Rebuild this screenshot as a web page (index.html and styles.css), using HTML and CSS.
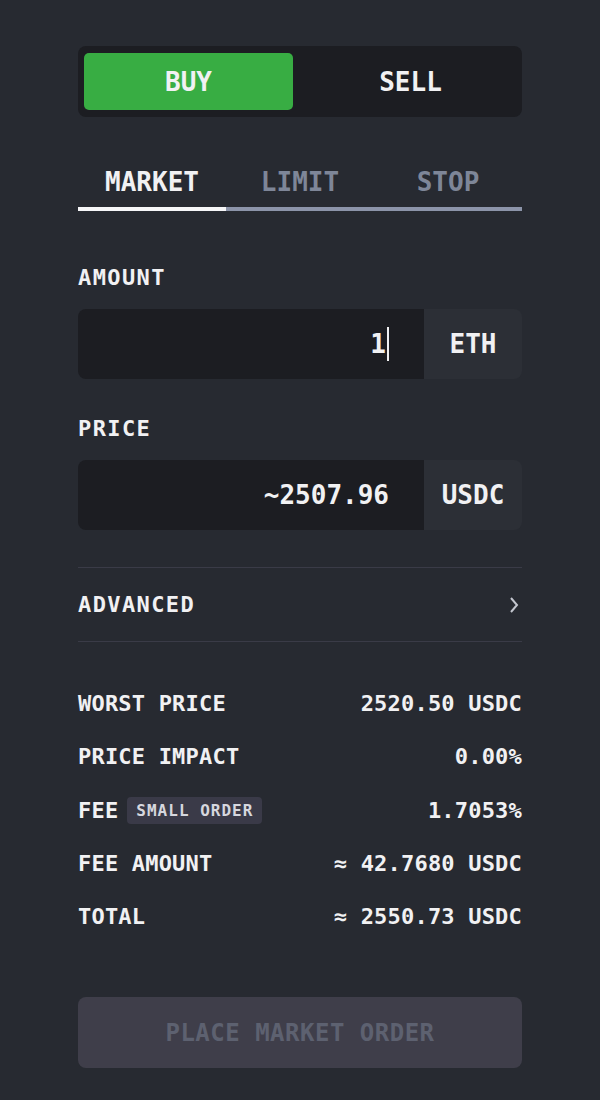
FILE: index.html
```html
<!DOCTYPE html>
<html lang="en">
<head>
    <meta charset="UTF-8">
    <meta name="viewport" content="width=device-width, initial-scale=1.0">
    <title>Order form</title>
    <link rel="stylesheet" href="styles.css">
</head>
<body>
    <main class="order-panel">
        <div class="side-toggle">
            <button class="side-btn side-buy">BUY</button>
            <button class="side-btn side-sell">SELL</button>
        </div>

        <nav class="order-tabs">
            <div class="tab active">MARKET</div>
            <div class="tab">LIMIT</div>
            <div class="tab">STOP</div>
        </nav>

        <label class="field-label label-amount">AMOUNT</label>
        <div class="field">
            <div class="field-value">1<span class="caret"></span></div>
            <div class="field-unit">ETH</div>
        </div>

        <label class="field-label label-price">PRICE</label>
        <div class="field">
            <div class="field-value">~2507.96</div>
            <div class="field-unit">USDC</div>
        </div>

        <div class="advanced-row">
            <span>ADVANCED</span>
            <svg class="chevron" width="12" height="18" viewBox="0 0 12 18">
                <polyline points="3,2 9,9 3,16" fill="none" stroke="#c3c6ce" stroke-width="2"/>
            </svg>
        </div>

        <div class="summary">
            <div class="summary-row">
                <span>WORST PRICE</span>
                <span>2520.50 USDC</span>
            </div>
            <div class="summary-row">
                <span>PRICE IMPACT</span>
                <span>0.00%</span>
            </div>
            <div class="summary-row">
                <span class="fee-label">FEE <span class="badge">SMALL ORDER</span></span>
                <span>1.7053%</span>
            </div>
            <div class="summary-row">
                <span>FEE AMOUNT</span>
                <span>≈ 42.7680 USDC</span>
            </div>
            <div class="summary-row">
                <span>TOTAL</span>
                <span>≈ 2550.73 USDC</span>
            </div>
        </div>

        <button class="place-order" disabled>PLACE MARKET ORDER</button>
    </main>
</body>
</html>
```

FILE: styles.css
```css
/* Base */
body {
    margin: 0;
    background-color: #272a31;
    color: #f1f1f3;
    font-family: 'DejaVu Sans Mono', 'Liberation Mono', monospace;
    font-weight: bold;
}

.order-panel {
    display: flex;
    flex-direction: column;
    padding: 46px 78px 0;
}

button {
    font-family: inherit;
    font-weight: inherit;
    border: none;
}

/* Buy / sell switch */
.side-toggle {
    display: grid;
    grid-template-columns: 209px 1fr;
    height: 71px;
    box-sizing: border-box;
    padding: 7px 6px;
    background-color: #1c1d22;
    border-radius: 8px;
}

.side-btn {
    font-size: 26px;
    color: #f1f1f3;
    background: transparent;
    border-radius: 5px;
}

.side-buy {
    background-color: #38ad43;
}

.side-sell {
    padding-left: 18px;
}

/* Order type tabs */
.order-tabs {
    display: grid;
    grid-template-columns: repeat(3, 1fr);
    margin-top: 49px;
}

.tab {
    text-align: center;
    font-size: 26px;
    line-height: 32px;
    padding-bottom: 9px;
    color: #7e8698;
    border-bottom: 4px solid #8c94a9;
}

.tab.active {
    color: #f1f1f3;
    border-bottom-color: #f6f6f8;
}

/* Inputs */
.field-label {
    font-size: 22px;
    line-height: 24px;
    letter-spacing: 1.4px;
}

.label-amount {
    margin-top: 55px;
}

.label-price {
    margin-top: 38px;
}

.field {
    display: flex;
    height: 70px;
    margin-top: 19px;
    border-radius: 8px;
    overflow: hidden;
}

.field-value {
    flex: 1;
    display: flex;
    align-items: center;
    justify-content: flex-end;
    padding-right: 35px;
    background-color: #1c1d22;
    font-size: 26px;
}

.caret {
    display: inline-block;
    width: 2px;
    height: 34px;
    margin-left: 1px;
    background-color: #f1f1f3;
}

.field-unit {
    width: 98px;
    display: flex;
    align-items: center;
    justify-content: center;
    background-color: #2c2f36;
    font-size: 26px;
}

/* Advanced */
.advanced-row {
    display: flex;
    align-items: center;
    justify-content: space-between;
    height: 73px;
    margin-top: 37px;
    border-top: 1px solid #3a3b47;
    border-bottom: 1px solid #3a3b47;
    font-size: 22px;
    letter-spacing: 1.4px;
}

.chevron {
    margin-right: 2px;
}

/* Summary */
.summary {
    display: flex;
    flex-direction: column;
    gap: 29.3px;
    margin-top: 50px;
}

.summary-row {
    display: flex;
    justify-content: space-between;
    align-items: center;
    height: 24px;
    font-size: 22px;
    line-height: 24px;
    letter-spacing: 0.2px;
}

.fee-label {
    display: flex;
    align-items: center;
}

.badge {
    display: inline-block;
    margin-left: 9px;
    padding: 0 9px;
    height: 27px;
    line-height: 27px;
    font-size: 16px;
    letter-spacing: 1px;
    color: #d6d7de;
    background-color: #3a3a48;
    border-radius: 4px;
}

/* Submit */
.place-order {
    margin-top: 68px;
    height: 71px;
    border-radius: 8px;
    background-color: #3f3e4a;
    color: #5d6170;
    font-size: 24px;
    letter-spacing: 0.5px;
}
```
